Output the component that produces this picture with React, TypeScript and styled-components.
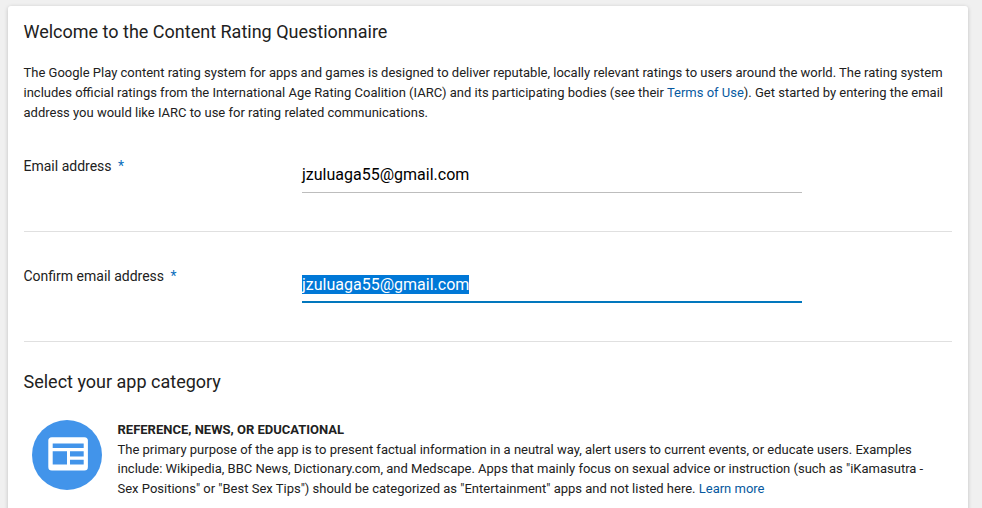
import React from "react";
import styled, { createGlobalStyle } from "styled-components";

const GlobalStyle = createGlobalStyle`
  * { box-sizing: border-box; }
  html, body { margin: 0; background: #f0f0f0; overflow: hidden; }
  body { font-family: Roboto, sans-serif; font-size: 13px; line-height: 20px; color: #212121; }
  h1, h2, h3, p { margin: 0; }
`;
const Page = styled.main`
  height: 508px;
  padding: 6px 14px 0 8px;
  overflow: hidden;
`;
const Card = styled.section`
  height: 520px;
  padding: 14px 16px 0 15.5px;
  background: #fff;
  border-radius: 3px;
  box-shadow: 0 1px 4px rgba(0, 0, 0, 0.2);
`;
const Heading = styled.h2<{ $top?: number }>`
  margin-top: ${(p) => p.$top ?? 0}px;
  font-size: 18px;
  font-weight: 400;
  line-height: 24px;
`;
const Intro = styled.p`
  margin-top: 19px;
  white-space: nowrap;
`;
const Link = styled.a`
  color: #0759a0;
  text-decoration: none;
`;
const Field = styled.div`
  display: grid;
  grid-template-columns: 278.5px 500px;
  height: 110px;
  padding-top: 34px;
  border-bottom: 1px solid #e0e0e0;
`;
const FieldGroup = styled.div`
  margin-top: -1px;
`;
const Label = styled.label`
  font-size: 14px;
  line-height: 20px;
`;
const Star = styled.span`
  margin-left: 3px;
  color: #0b6fbd;
`;
const Entry = styled.div<{ $active?: boolean }>`
  height: 37px;
  padding-top: 9px;
  font-size: 16px;
  line-height: 20px;
  color: #000;
  border-bottom: ${(p) => (p.$active ? "2px solid #0277bd" : "1px solid #bdbdbd")};
`;
const Selected = styled.span`
  color: #fff;
  background: #0078d7;
`;
const Category = styled.article`
  display: flex;
  gap: 15.5px;
  margin: 26px 0 0 8.5px;
`;
const Description = styled.div`
  white-space: nowrap;
  line-height: 19.5px;
`;
const CategoryTitle = styled.h3`
  font-size: 13px;
  font-weight: 700;
  line-height: 20px;
  margin-bottom: -0.5px;
`;

const NewsIcon = () => (
  <svg width="70" height="70" viewBox="0 0 70 70">
    <circle cx="35" cy="35" r="35" fill="#4294ea" />
    <rect x="16.3" y="17.3" width="39.6" height="33.3" rx="3.5" fill="#fff" />
    <path fill="#4294ea" d="M20.7 23.5h31v4.5h-31zM20.7 31.2h14.3v13.2h-14.3zM38 31.2h13.7v5.2h-13.7zM38 39.8h13.7v4.6h-13.7z" />
  </svg>
);

export default function App() {
  return (
    <>
      <GlobalStyle />
      <Page>
        <Card>
          <Heading>Welcome to the Content Rating Questionnaire</Heading>
          <Intro>
            The Google Play content rating system for apps and games is designed to deliver reputable, locally relevant ratings to users around the world. The rating system<br />
            includes official ratings from the International Age Rating Coalition (IARC) and its participating bodies (see their <Link>Terms of Use</Link>). Get started by entering the email<br />
            address you would like IARC to use for rating related communications.
          </Intro>
          <FieldGroup>
            <Field>
              <Label>Email address <Star>*</Star></Label>
              <Entry>jzuluaga55@gmail.com</Entry>
            </Field>
            <Field>
              <Label>Confirm email address <Star>*</Star></Label>
              <Entry $active><Selected>jzuluaga55@gmail.com</Selected></Entry>
            </Field>
          </FieldGroup>
          <Heading $top={28}>Select your app category</Heading>
          <Category>
            <NewsIcon />
            <Description>
              <CategoryTitle>REFERENCE, NEWS, OR EDUCATIONAL</CategoryTitle>
              <p>
                The primary purpose of the app is to present factual information in a neutral way, alert users to current events, or educate users. Examples<br />
                include: Wikipedia, BBC News, Dictionary.com, and Medscape. Apps that mainly focus on sexual advice or instruction (such as "iKamasutra -<br />
                Sex Positions" or "Best Sex Tips") should be categorized as "Entertainment" apps and not listed here. <Link>Learn more</Link>
              </p>
            </Description>
          </Category>
        </Card>
      </Page>
    </>
  );
}
